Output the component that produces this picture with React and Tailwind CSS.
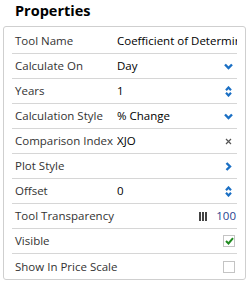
import React from 'react'

const ChevronDown = () => (
  <svg width="9" height="7" viewBox="0 0 9 7" className="block">
    <path d="M1 1.5 L4.5 5 L8 1.5" fill="none" stroke="#1a6fc4" strokeWidth="2.4" />
  </svg>
)

const ChevronRight = () => (
  <svg width="7" height="9" viewBox="0 0 7 9" className="block">
    <path d="M1.5 1 L5 4.5 L1.5 8" fill="none" stroke="#1a6fc4" strokeWidth="2.4" />
  </svg>
)

const Spinner = () => (
  <svg width="7" height="11" viewBox="0 0 7 11" className="block">
    <path d="M1 4.2 L3.5 1.5 L6 4.2" fill="none" stroke="#1a6fc4" strokeWidth="2.2" />
    <path d="M1 6.8 L3.5 9.5 L6 6.8" fill="none" stroke="#1a6fc4" strokeWidth="2.2" />
  </svg>
)

const Cross = () => (
  <svg width="7" height="7" viewBox="0 0 7 7" className="block">
    <path d="M1 1 L6 6 M6 1 L1 6" fill="none" stroke="#555" strokeWidth="1.2" />
  </svg>
)

const rows = [
  { label: 'Tool Name', value: 'Coefficient of Determination' },
  { label: 'Calculate On', value: 'Day', icon: <ChevronDown /> },
  { label: 'Years', value: '1', icon: <Spinner /> },
  { label: 'Calculation Style', value: '% Change', icon: <ChevronDown /> },
  { label: 'Comparison Index', value: 'XJO', icon: <Cross /> },
  { label: 'Plot Style', icon: <ChevronRight /> },
  { label: 'Offset', value: '0', icon: <Spinner /> },
  { label: 'Tool Transparency', transparency: true },
  { label: 'Visible', check: true },
  { label: 'Show In Price Scale', check: false },
]

export default function App() {
  return (
    <div className="w-[250px] h-[285px] bg-white font-['Open_Sans',sans-serif] text-[#222]">
      <div className="pl-[15px] pt-[1px] h-[26px] text-[14.5px] font-bold leading-[20px] text-black">Properties</div>
      <div className="ml-[3px] w-[243px] border border-[#cfcfcf] rounded-[3px] px-[8px] pt-[2px]">
        {rows.map((r, i) => (
          <div
            key={r.label}
            className={`h-[25px] flex items-center pl-[3px] text-[11.5px] ${i < rows.length - 1 ? 'border-b border-[#d6d6d6]' : ''}`}
          >
            <div className="w-[102px] shrink-0 whitespace-nowrap text-[#333]">{r.label}</div>
            <div className="flex-1 min-w-0 overflow-hidden whitespace-nowrap text-black">{r.value}</div>
            {r.icon && <div className="w-[14px] shrink-0 flex justify-center mr-[2px]">{r.icon}</div>}
            {r.transparency && (
              <div className="flex items-center gap-[9px] mr-[1px]">
                <div className="flex gap-[1px]">
                  <span className="w-[2px] h-[9px] bg-[#444]" />
                  <span className="w-[2px] h-[9px] bg-[#444]" />
                  <span className="w-[2px] h-[9px] bg-[#444]" />
                </div>
                <span className="text-[#2a3f8f]">100</span>
              </div>
            )}
            {r.check !== undefined && (
              <div className="w-[12px] h-[12px] mr-[2px] border border-[#c4c4c4] bg-white flex items-center justify-center">
                {r.check && (
                  <svg width="9" height="8" viewBox="0 0 9 8">
                    <path d="M1 4 L3.5 6.5 L8 1.2" fill="none" stroke="#1f8a1f" strokeWidth="2" />
                  </svg>
                )}
              </div>
            )}
          </div>
        ))}
      </div>
    </div>
  )
}
